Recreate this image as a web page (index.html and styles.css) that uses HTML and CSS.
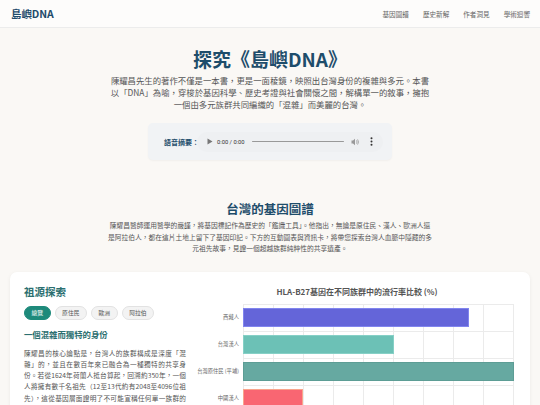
FILE: index.html
```html
<!DOCTYPE html>
<html lang="zh-Hant">
<head>
<meta charset="utf-8">
<title>島嶼DNA</title>
<link rel="stylesheet" href="styles.css">
</head>
<body>
<header class="topbar">
  <div class="logo">島嶼DNA</div>
  <nav class="nav">
    <a>基因圖譜</a>
    <a>歷史新解</a>
    <a>作者洞見</a>
    <a>學術迴響</a>
  </nav>
</header>

<section class="hero">
  <h1 class="hero-title">探究《島嶼DNA》</h1>
  <p class="hero-text">陳耀昌先生的著作不僅是一本書，更是一面稜鏡，映照出台灣身份的複雜與多元。本書以「DNA」為喻，穿梭於基因科學、歷史考證與社會關懷之間，解構單一的敘事，擁抱一個由多元族群共同編織的「混雜」而美麗的台灣。</p>
  <div class="audio-box">
    <span class="audio-label">語音摘要：</span>
    <div class="player">
      <svg class="play" width="6" height="7" viewBox="0 0 6 7"><path d="M0.5 0.5 L5.5 3.5 L0.5 6.5 Z" fill="#777"/></svg>
      <span class="time">0:00 / 0:00</span>
      <span class="track"></span>
      <svg class="vol" width="9" height="8" viewBox="0 0 9 8"><path d="M0.5 2.6 H2 L4 0.8 V7.2 L2 5.4 H0.5 Z" fill="#999"/><path d="M5.5 2.4 Q6.6 4 5.5 5.6 M6.6 1.4 Q8.4 4 6.6 6.6" stroke="#999" stroke-width="0.8" fill="none"/></svg>
      <svg class="dots" width="3" height="9" viewBox="0 0 3 9"><circle cx="1.5" cy="1.3" r="1" fill="#333"/><circle cx="1.5" cy="4.5" r="1" fill="#333"/><circle cx="1.5" cy="7.7" r="1" fill="#333"/></svg>
    </div>
  </div>
</section>

<section class="intro">
  <h2 class="intro-title">台灣的基因圖譜</h2>
  <p class="intro-text">陳耀昌醫師運用醫學的嚴謹，將基因標記作為歷史的「鑑識工具」。他指出，無論是原住民、漢人、歐洲人還是阿拉伯人，都在這片土地上留下了基因印記。下方的互動圖表與資訊卡，將帶您探索台灣人血脈中隱藏的多元祖先故事，見證一個超越族群純粹性的共享遺產。</p>
</section>

<section class="card">
  <div class="explore">
    <h3 class="explore-title">祖源探索</h3>
    <div class="pills">
      <button class="pill active">總覽</button>
      <button class="pill">原住民</button>
      <button class="pill">歐洲</button>
      <button class="pill">阿拉伯</button>
    </div>
    <h4 class="sub-title">一個混雜而獨特的身份</h4>
    <p class="sub-text">陳耀昌的核心論點是，台灣人的族群構成是深度「混雜」的，並且在數百年來已融合為一種獨特的共享身份。若從1624年荷蘭人抵台算起，回溯約350年，一個人將擁有數千名祖先（12至13代約有2048至4096位祖先），這從基因層面證明了不可能宣稱任何單一族群的「純粹」血統，這也成為他倡導族群和諧的基礎。</p>
  </div>
  <div class="chart">
    <div class="chart-title">HLA-B27基因在不同族群中的流行率比較 (%)</div>
    <div class="chart-grid">
      <div class="labels">
        <div class="label">西藏人</div>
        <div class="label">台灣漢人</div>
        <div class="label">台灣原住民 (平埔)</div>
        <div class="label">中國漢人</div>
        <div class="label">日本人</div>
      </div>
      <div class="plot">
        <div class="row"><div class="bar b1" style="width:83.3%"></div></div>
        <div class="row"><div class="bar b2" style="width:55.6%"></div></div>
        <div class="row"><div class="bar b3" style="width:100%"></div></div>
        <div class="row"><div class="bar b4" style="width:22.2%"></div></div>
        <div class="row"><div class="bar b5" style="width:11.1%"></div></div>
      </div>
    </div>
  </div>
</section>
</body>
</html>
```
FILE: styles.css
```css
* { box-sizing: border-box; }
html, body { margin: 0; padding: 0; }
body {
  background: #faf8f5;
  font-family: "Noto Sans CJK TC", "Noto Sans", sans-serif;
  color: #444;
  width: 540px;
  overflow: hidden;
}
.topbar {
  height: 28px;
  display: flex;
  align-items: center;
  justify-content: space-between;
  padding: 0 10px 0 11px;
  background: #fdfcfb;
  border-bottom: 1px solid #ececec;
}
.logo {
  font-size: 10.5px;
  font-weight: 700;
  color: #1f4b6b;
  letter-spacing: -0.1px;
}
.nav { display: flex; gap: 14px; }
.nav a {
  font-size: 6.6px;
  color: #666;
}
.hero {
  display: flex;
  flex-direction: column;
  align-items: center;
  padding-top: 19px;
}
.hero-title {
  margin: 0;
  font-size: 19px;
  line-height: 24px;
  font-weight: 700;
  color: #1e4d6b;
}
.hero-text {
  margin: 3px 0 0;
  width: 323px;
  font-size: 8.4px;
  line-height: 12px;
  text-align: center;
  color: #555;
}
.audio-box {
  margin-top: 13px;
  width: 244px;
  height: 37px;
  display: flex;
  align-items: center;
  padding: 0 9px 0 16px;
  background: #f1f3f5;
  border-radius: 5px;
  box-shadow: 0 1px 2px rgba(0,0,0,0.04);
}
.audio-label {
  font-size: 7px;
  font-weight: 700;
  color: #1e4d6b;
  width: 33px;
  white-space: nowrap;
}
.player {
  flex: 1;
  height: 20px;
  border-radius: 10px;
  background: #eef0f2;
  display: flex;
  align-items: center;
  padding: 0 10px 0 10px;
}
.play { margin-right: 4px; }
.time { font-size: 5.8px; color: #333; font-family: Roboto, sans-serif; white-space: nowrap; }
.track {
  flex: 1;
  height: 1.5px;
  background: #999;
  margin: 0 7px 0 7px;
  border-radius: 1px;
}
.vol { margin-right: 10px; }
.intro {
  display: flex;
  flex-direction: column;
  align-items: center;
  padding-top: 40px;
}
.intro-title {
  margin: 0;
  font-size: 12.5px;
  line-height: 17px;
  font-weight: 700;
  color: #1e4d6b;
}
.intro-text {
  margin: 3px 0 0;
  width: 326px;
  font-size: 6.75px;
  line-height: 11.5px;
  text-align: center;
  color: #555;
}
.card {
  margin: 17px 10px 0;
  background: #fff;
  border-radius: 7px;
  box-shadow: 0 1px 4px rgba(0,0,0,0.06);
  padding: 13px 14px 14px;
  display: grid;
  grid-template-columns: 162px 1fr;
  gap: 12px;
}
.explore-title {
  margin: 0;
  font-size: 10.5px;
  line-height: 14px;
  font-weight: 700;
  color: #2b6f70;
}
.pills { display: flex; gap: 4px; margin-top: 7px; }
.pill {
  font-family: inherit;
  font-size: 5.8px;
  height: 14px;
  padding: 0 6.5px;
  border-radius: 7px;
  border: 1px solid #e2e2e2;
  background: #f3f3f3;
  color: #555;
  line-height: 12px;
}
.pill.active { background: #1e8a7b; border-color: #1e8a7b; color: #fff; }
.sub-title {
  margin: 9px 0 0;
  font-size: 8.4px;
  line-height: 11px;
  font-weight: 700;
  color: #2b6f70;
}
.sub-text {
  margin: 8px 0 0;
  font-size: 6.66px;
  line-height: 11.3px;
  text-align: justify;
  color: #555;
}
.chart { display: flex; flex-direction: column; }
.chart-title {
  text-align: center;
  font-size: 8px;
  line-height: 14px;
  font-weight: 700;
  color: #555;
}
.chart-grid {
  margin-top: 5px;
  display: grid;
  grid-template-columns: 45px 271px;
}
.labels { display: flex; flex-direction: column; }
.label {
  height: 27px;
  display: flex;
  align-items: center;
  justify-content: flex-end;
  padding-right: 4px;
  font-size: 5.3px;
  color: #666;
  white-space: nowrap;
}
.plot {
  border-top: 1px solid #ebebeb;
  background: repeating-linear-gradient(to right, #ebebeb 0 1px, transparent 1px 30px);
}
.row {
  height: 27px;
  border-bottom: 1px solid #ebebeb;
  display: flex;
  align-items: center;
}
.bar { height: 19px; border: 1px solid; }
.b1 { background: #6465d9; border-color: #8185ee; }
.b2 { background: #6cc1b6; border-color: #86d0c6; }
.b3 { background: #66a9a1; border-color: #5d9d95; }
.b4 { background: #f96672; border-color: #f9a48c; }
.b5 { background: #f5b84a; border-color: #f2c46a; }
```
